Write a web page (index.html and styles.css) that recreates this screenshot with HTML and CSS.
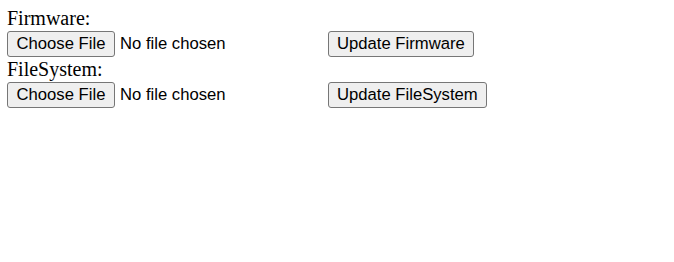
FILE: index.html
```html
<!DOCTYPE html>
<html>
<head>
<meta charset="utf-8">
<link rel="stylesheet" href="styles.css">
</head>
<body class="page">
<form class="upload" method="POST" action="" enctype="multipart/form-data">
  <div class="label">Firmware:</div>
  <div class="row">
    <input class="file" type="file" accept=".bin,.bin.gz" name="firmware">
    <input class="submit" type="submit" value="Update Firmware">
  </div>
</form>
<form class="upload" method="POST" action="" enctype="multipart/form-data">
  <div class="label">FileSystem:</div>
  <div class="row">
    <input class="file" type="file" accept=".bin,.bin.gz,.image" name="filesystem">
    <input class="submit" type="submit" value="Update FileSystem">
  </div>
</form>
</body>
</html>
```
FILE: styles.css
```css
.page {
  margin: 7px;
  font-family: "Liberation Serif", "Times New Roman", serif;
  font-size: 20px;
  color: #000;
  background: #fff;
}
.upload {
  margin: 0;
}
.label {
  height: 23px;
  line-height: 23px;
}
.row {
  display: flex;
  align-items: flex-start;
  gap: 5px;
  padding: 1px 0 0;
  height: 27px;
}
.file {
  width: 316px;
  height: 26px;
  margin: 0;
  padding: 0;
  font-family: "Liberation Sans", Arial, sans-serif;
  font-size: 16.67px;
  line-height: 26px;
  color: #000;
}
.file::file-selector-button {
  box-sizing: border-box;
  width: 108px;
  height: 26px;
  margin: 0 5px 0 0;
  padding: 0;
  font-family: "Liberation Sans", Arial, sans-serif;
  font-size: 16.67px;
  color: #000;
  background: #efefef;
  border: 1px solid #767676;
  border-radius: 3px;
}
.submit {
  box-sizing: border-box;
  height: 26px;
  margin: 0;
  padding: 0 8px;
  font-family: "Liberation Sans", Arial, sans-serif;
  font-size: 16.67px;
  color: #000;
  background: #efefef;
  border: 1px solid #767676;
  border-radius: 3px;
}
```
